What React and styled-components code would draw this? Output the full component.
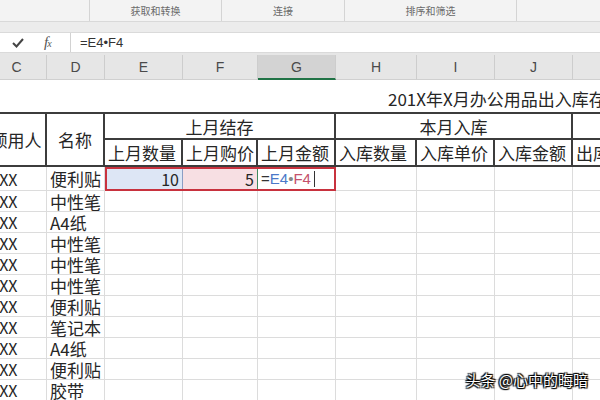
import React from 'react';
import styled, { createGlobalStyle } from 'styled-components';

const GlobalStyle = createGlobalStyle`
    html, body {
        margin: 0;
        padding: 0;
        width: 600px;
        height: 400px;
        overflow: hidden;
        background: #ffffff;
    }
    * {
        box-sizing: border-box;
    }
`

const CJK = `"Noto Sans CJK SC", "Liberation Sans", sans-serif`
const COLS = '60px 58px 78px 75px 78px 81px 78px 78px 80px'

const Page = styled.div`
    position: relative;
    width: 600px;
    height: 400px;
    overflow: hidden;
`

const Ribbon = styled.div`
    display: flex;
    height: 22px;
    background: #f3f3f3;
    border-bottom: 1px solid #d9d9d9;
`

const RibbonGroup = styled.div`
    width: ${p => p.$w}px;
    flex-shrink: 0;
    display: flex;
    align-items: flex-end;
    justify-content: center;
    padding-bottom: 3px;
    border-right: ${p => (p.$last ? 'none' : '1px solid #d4d4d4')};
    font-family: ${CJK};
    font-size: 10px;
    color: #6a6a6a;
`

const Band = styled.div`
    height: 10px;
    background: #ececec;
`

const FormulaBar = styled.div`
    display: flex;
    height: 21px;
    background: #ffffff;
    border-top: 1px solid #dadada;
    border-bottom: 1px solid #dadada;
`

const FormulaTools = styled.div`
    width: 71px;
    display: flex;
    align-items: center;
    padding-left: 12px;
    gap: 20px;
    border-right: 1px solid #d2d2d2;
`

const Fx = styled.span`
    font-family: "Liberation Serif", serif;
    font-style: italic;
    font-size: 15px;
    color: #555;
    letter-spacing: -1px;

    small {
        font-size: 10px;
    }
`

const FormulaText = styled.div`
    display: flex;
    align-items: center;
    padding-left: 9px;
    font-family: "Liberation Sans", sans-serif;
    font-size: 13px;
    color: #333;
`

const Gap = styled.div`
    height: 2px;
    background: #e6e6e6;
`

const ColHeaders = styled.div`
    display: grid;
    grid-template-columns: ${COLS};
    height: 25px;
    margin-left: -13px;
    background: #e6e6e6;
`

const ColHead = styled.div`
    display: flex;
    align-items: center;
    justify-content: center;
    font-family: "Liberation Sans", sans-serif;
    font-size: 14px;
    color: #4a4a4a;
    background: ${p => (p.$active ? '#d3d3d3' : '#e6e6e6')};
    border-right: 1px solid #cdcdcd;
    border-bottom: ${p => (p.$active ? '2px solid #217346' : '1px solid #d0d0d0')};
`

const Sheet = styled.div`
    display: grid;
    grid-template-columns: ${COLS};
    grid-template-rows: 32px 28px 27px 24px repeat(11, 21px);
    margin-left: -13px;
    font-family: ${CJK};
    font-size: 17px;
    color: #262626;
`

const Title = styled.div`
    grid-column: 1 / -1;
    grid-row: 1;
    display: flex;
    align-items: flex-end;
    padding: 0 0 5px 401px;
    white-space: nowrap;
    overflow: hidden;
    line-height: 1;
`

const HeadCell = styled.div`
    grid-column: ${p => p.$col};
    grid-row: ${p => p.$row};
    display: flex;
    align-items: center;
    justify-content: ${p => (p.$left ? 'flex-start' : 'center')};
    padding-left: ${p => (p.$left ? '3px' : '0')};
    white-space: nowrap;
    overflow: hidden;
    border-right: 2px solid #3c3c3c;
    border-bottom: 2px solid #3c3c3c;
    border-top: ${p => (p.$top ? '2px solid #3c3c3c' : 'none')};
    line-height: 1;
`

const Cell = styled.div`
    grid-column: ${p => p.$col};
    grid-row: ${p => p.$row};
    display: flex;
    align-items: center;
    justify-content: ${p => (p.$right ? 'flex-end' : 'flex-start')};
    padding: 0 3px;
    white-space: nowrap;
    overflow: hidden;
    background: ${p => p.$bg || '#ffffff'};
    border-right: 1px solid ${p => p.$edge || '#dcdcdc'};
    border-bottom: 1px solid #dcdcdc;
    font-size: ${p => (p.$latin ? '16px' : '17px')};
    line-height: 1;
`

const Formula = styled.span`
    display: flex;
    align-items: center;
    font-family: "Liberation Sans", sans-serif;
    font-size: 15px;
`

const RefBox = styled.div`
    grid-column: 3 / 6;
    grid-row: 4;
    position: relative;
    z-index: 2;
    border: 2px solid #c8323e;
    pointer-events: none;
`

const Ref = styled.span`
    color: ${p => p.$c};
`

const Caret = styled.span`
    display: inline-block;
    width: 1px;
    height: 16px;
    margin-left: 3px;
    background: #333;
`

const Watermark = styled.div`
    position: absolute;
    right: 12px;
    bottom: 10px;
    font-family: ${CJK};
    font-size: 15px;
    color: #ffffff;
    text-shadow: 0 0 1px #000, 1px 1px 1px #000, -1px -1px 1px #000, 1px -1px 1px #000, -1px 1px 1px #000;
    z-index: 5;
`

const CheckIcon = () => (
    <svg width="12" height="10" viewBox="0 0 12 10">
        <polyline points="1,5 4.5,8.5 11,1" fill="none" stroke="#444" strokeWidth="2" />
    </svg>
)

const groups = [
    { w: 90, label: '' },
    { w: 132, label: '获取和转换' },
    { w: 123, label: '连接' },
    { w: 172, label: '排序和筛选' },
    { w: 83, label: '', last: true },
]

const letters = ['C', 'D', 'E', 'F', 'G', 'H', 'I', 'J', 'K']

const names = ['便利贴', '中性笔', 'A4纸', '中性笔', '中性笔', '中性笔', '便利贴', '笔记本', 'A4纸', '便利贴', '胶带']

const subHeads = ['上月数量', '上月购价', '上月金额', '入库数量', '入库单价', '入库金额', '出库数量']

const App = () => {
    const rows = names.map((name, i) => {
        const r = i + 4
        const first = i === 0
        return (
            <React.Fragment key={r}>
                <Cell $col={1} $row={r} $latin>XXX</Cell>
                <Cell $col={2} $row={r}>{name}</Cell>
                <Cell $col={3} $row={r} $right $latin $bg={first ? '#dde6f5' : null} $edge={first ? '#8b9ec4' : null}>
                    {first ? '10' : ''}
                </Cell>
                <Cell $col={4} $row={r} $right $latin $bg={first ? '#f7dfe3' : null} $edge={first ? '#3f8a5f' : null}>
                    {first ? '5' : ''}
                </Cell>
                <Cell $col={5} $row={r} $latin>
                    {first && (
                        <Formula>
                            <Ref $c="#333">=</Ref>
                            <Ref $c="#4b78c8">E4</Ref>
                            <Ref $c="#888">•</Ref>
                            <Ref $c="#c4506c">F4</Ref>
                            <Caret />
                        </Formula>
                    )}
                </Cell>
                {[6, 7, 8, 9].map(c => (
                    <Cell key={c} $col={c} $row={r} />
                ))}
            </React.Fragment>
        )
    })

    return (
        <Page>
            <GlobalStyle />
            <Ribbon>
                {groups.map((g, i) => (
                    <RibbonGroup key={i} $w={g.w} $last={g.last}>{g.label}</RibbonGroup>
                ))}
            </Ribbon>
            <Band />
            <FormulaBar>
                <FormulaTools>
                    <CheckIcon />
                    <Fx>f<small>x</small></Fx>
                </FormulaTools>
                <FormulaText>=E4•F4</FormulaText>
            </FormulaBar>
            <Gap />
            <ColHeaders>
                {letters.map(l => (
                    <ColHead key={l} $active={l === 'G'}>{l}</ColHead>
                ))}
            </ColHeaders>
            <Sheet>
                <Title>201X年X月办公用品出入库存表</Title>
                <HeadCell $col="1" $row="2 / span 2" $top>领用人</HeadCell>
                <HeadCell $col="2" $row="2 / span 2" $top>名称</HeadCell>
                <HeadCell $col="3 / span 3" $row="2" $top>上月结存</HeadCell>
                <HeadCell $col="6 / span 3" $row="2" $top>本月入库</HeadCell>
                <HeadCell $col="9" $row="2" $top />
                {subHeads.map((h, i) => (
                    <HeadCell key={h} $col={i + 3} $row="3" $left>{h}</HeadCell>
                ))}
                {rows}
                <RefBox />
            </Sheet>
            <Watermark>头条 @心中的晦暗</Watermark>
        </Page>
    )
}

export default App;
